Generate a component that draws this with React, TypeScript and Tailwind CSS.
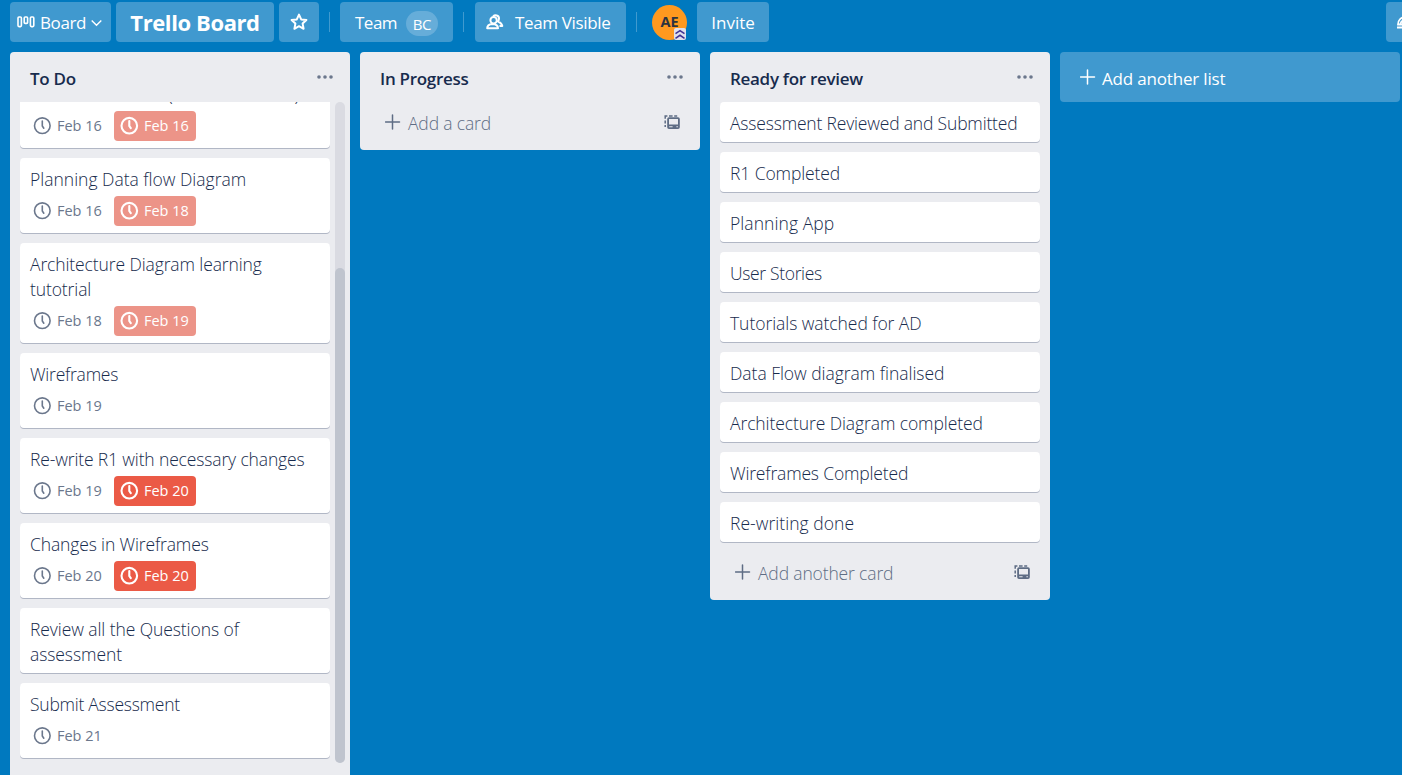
import type { ReactNode } from "react";

function Clock({ light }: { light?: boolean }) {
  return (
    <svg className="size-5 shrink-0" viewBox="0 0 20 20" fill="none" stroke="currentColor" strokeWidth={light ? 2.1 : 1.6} strokeLinecap="round">
      <circle cx="10.3" cy="9.7" r="7.8" />
      <path d="M10.3 5v5l1.5 2.2" />
    </svg>
  );
}

function Plus() {
  return (
    <svg className="size-4 shrink-0" viewBox="0 0 16 16" stroke="currentColor" strokeWidth="1.5" strokeLinecap="round">
      <path d="M7.5 1v14M.5 8h14" />
    </svg>
  );
}

function Dots() {
  return (
    <svg className="h-4 w-4 shrink-0" viewBox="0 0 16 16" fill="currentColor">
      <circle cx="2" cy="8" r="1.8" />
      <circle cx="8" cy="8" r="1.8" />
      <circle cx="14" cy="8" r="1.8" />
    </svg>
  );
}

function Template() {
  return (
    <svg className="h-[15px] w-4 shrink-0" viewBox="0 0 16 15" fill="none" stroke="currentColor">
      <path
        d="M5 2.2h9a1.8 1.8 0 0 1 1.8 1.8v8.2a1.8 1.8 0 0 1-1.8 1.8H5a1.8 1.8 0 0 1-1.8-1.8V4A1.8 1.8 0 0 1 5 2.2zM5 4v5.600h9V4zM5.2 11.2v1.100h3.400v-1.100zM12.400 11.2v1.100h1.500v-1.100z"
        fill="currentColor"
        fillRule="evenodd"
        stroke="none"
      />
      <path d="M1.2 12V10M1.2 8.4V5.4M1.2 3.8V.9H3.4M5 .9h3.6M10.2 .9h3" strokeWidth="1.5" />
    </svg>
  );
}

type CardData = { title: string; track: string; start?: string; due?: string; faded?: boolean };

const todo: CardData[] = [
  { title: "Create wireframes (first version draft)", track: "tracking-[-0.6px]", start: "Feb 16", due: "Feb 16", faded: true },
  { title: "Planning Data flow Diagram", track: "tracking-[0px]", start: "Feb 16", due: "Feb 18", faded: true },
  { title: "Architecture Diagram learning tutotrial", track: "tracking-[-0.11px]", start: "Feb 18", due: "Feb 19", faded: true },
  { title: "Wireframes", track: "tracking-[-0.24px]", start: "Feb 19" },
  { title: "Re-write R1 with necessary changes", track: "tracking-[-0.14px]", start: "Feb 19", due: "Feb 20" },
  { title: "Changes in Wireframes", track: "tracking-[-0.14px]", start: "Feb 20", due: "Feb 20" },
  { title: "Review all the Questions of assessment", track: "tracking-[-0.08px]" },
  { title: "Submit Assessment", track: "tracking-[-0.25px]", start: "Feb 21" },
];

const review: CardData[] = [
  { title: "Assessment Reviewed and Submitted", track: "tracking-[-0.18px]" },
  { title: "R1 Completed", track: "tracking-[-0.1px]" },
  { title: "Planning App", track: "tracking-[0.07px]" },
  { title: "User Stories", track: "tracking-[-0.34px]" },
  { title: "Tutorials watched for AD", track: "tracking-[-0.06px]" },
  { title: "Data Flow diagram finalised", track: "tracking-[-0.03px]" },
  { title: "Architecture Diagram completed", track: "tracking-[-0.09px]" },
  { title: "Wireframes Completed", track: "tracking-[-0.17px]" },
  { title: "Re-writing done", track: "tracking-[0.04px]" },
];

function Card({ title, track, start, due, faded }: CardData) {
  return (
    <div className="shrink-0 rounded-[4px] bg-white px-[10px] pt-[9px] pb-[6px] shadow-[0_1px_0_#b1b7c5]">
      <div className={`text-[17.5px] leading-[25px] font-[350] ${track}`}>{title}</div>
      {start && (
        <div className="mt-1 mb-px flex h-[30px] gap-[7px] text-[14.5px] tracking-[-0.03px]">
          <div className="flex w-[77px] items-center gap-[5px] pl-[2px] text-[#6b778c]">
            <Clock />
            <span className="-mt-px">{start}</span>
          </div>
          {due && (
            <div className={`flex w-[82px] items-center gap-[5px] rounded-[4px] pl-[5px] text-white ${faded ? "bg-[#ec9488]" : "bg-[#eb5a46]"}`}>
              <Clock light />
              <span className="-mt-px font-medium">{due}</span>
            </div>
          )}
        </div>
      )}
    </div>
  );
}

function ListHeader({ children }: { children: ReactNode }) {
  return (
    <div className="flex h-[50px] shrink-0 items-center justify-between pr-[17px] pl-5">
      <h2 className="pt-[3px] text-[17px] font-semibold tracking-[-0.3px]">{children}</h2>
      <span className="text-[#6b778c]">
        <Dots />
      </span>
    </div>
  );
}

function AddCard({ children }: { children: ReactNode }) {
  return (
    <div className="flex h-[40px] items-center pr-5 pl-[25px] text-[#5e6c84]">
      <Plus />
      <span className="mt-[3px] ml-[7px] flex-1 text-[17.5px] font-[350] tracking-[-0.15px]">{children}</span>
      <Template />
    </div>
  );
}

const Divider = () => <div className="h-5 w-px bg-white/25" />;

export default function App() {
  return (
    <div className="flex h-[775px] w-[1402px] flex-col overflow-hidden bg-[#0079bf] font-['Open_Sans','Noto_Sans',sans-serif] text-[#172b4d]">
      <header className="flex h-[52px] shrink-0 items-center pt-0.5 pb-[10px] pl-[10px] text-[17px] whitespace-nowrap text-white">
        <div className="flex h-10 w-[101px] items-center rounded-[4px] bg-[#4099cf] pl-[7px]">
          <svg className="h-3 w-[18px]" viewBox="0 0 18 12" fill="none" stroke="currentColor" strokeWidth="1.6">
            <rect x="1" y="1" width="3.4" height="9.6" rx="1" />
            <rect x="7.2" y="1" width="3.4" height="6.4" rx="1" />
            <rect x="13.4" y="1" width="3.4" height="9.6" rx="1" />
          </svg>
          <span className="mt-px ml-[5px] tracking-[-0.4px]">Board</span>
          <svg className="mt-[2px] ml-[5px] h-2 w-[11px]" viewBox="0 0 11 8" fill="none" stroke="currentColor" strokeWidth="1.4">
            <path d="M.7 1.5 5.5 6.3l4.8-4.8" />
          </svg>
        </div>
        <div className="ml-[5px] flex h-10 w-[158px] items-center justify-center rounded-[4px] bg-[#4099cf]">
          <h1 className="text-[22px] font-bold tracking-[-0.4px]">Trello Board</h1>
        </div>
        <div className="ml-[5px] flex h-10 w-10 items-center justify-center rounded-[4px] bg-[#4099cf]">
          <svg className="size-[18px]" viewBox="0 0 18 18" fill="none" stroke="currentColor" strokeWidth="2" strokeLinejoin="round">
            <path d="m9 1.600 2.200 4.800 5.200.6-3.800 3.600 1 5.200L9 13.200l-4.600 2.600 1-5.200L1.600 7l5.200-.6z" />
          </svg>
        </div>
        <div className="w-[10px]" />
        <Divider />
        <div className="ml-[10px] flex h-10 w-[113px] items-center rounded-[4px] bg-[#4099cf] pl-[15px]">
          <span className="mt-px w-[51px] tracking-[-0.5px]">Team</span>
          <span className="mt-[3px] flex h-[25px] w-8 items-center justify-center rounded-full bg-[#66add9] pt-px text-[15px] tracking-[-0.2px]">BC</span>
        </div>
        <div className="w-[10px]" />
        <Divider />
        <div className="ml-[11px] flex h-10 w-[151px] items-center rounded-[4px] bg-[#4099cf] pl-[11px]">
          <svg className="h-4 w-[18px]" viewBox="0 0 18 16" fill="none" stroke="currentColor" strokeWidth="2" strokeLinejoin="round">
            <path d="M1.200 14.300c0-2.600 1.800-4.200 5.300-4.400 3.500.1 5.500 1.800 5.500 4.400z" />
            <circle cx="7.600" cy="6.200" r="3.200" />
            <path d="M7.200 2.400c1.600-1.900 5.800-1.400 5.800 2 0 1.500-.4 2.200-1.100 3 2.600 1.200 4 2.600 4.400 4.600h-2.800" />
          </svg>
          <span className="mt-px ml-[11px] tracking-[-0.34px]">Team Visible</span>
        </div>
        <div className="w-[10px]" />
        <Divider />
        <div className="relative ml-[15px] flex size-[35px] items-center justify-center rounded-full bg-[#ff991f] text-[14.5px] font-bold text-[#2c3340]">
          AE
          <svg className="absolute right-px bottom-0 size-3" viewBox="0 0 12 12" fill="none">
            <rect width="12" height="12" rx="2" fill="#dfe1ec" />
            <path d="m1.500 5.700 4.500-3 4.500 3M1.500 10.300l4.500-3 4.500 3" stroke="#403294" strokeWidth="1.600" />
          </svg>
        </div>
        <div className="ml-[10px] flex h-10 w-[72px] items-center justify-center rounded-[4px] bg-[#4099cf]">
          <span className="mt-px">Invite</span>
        </div>
        <div className="ml-auto flex h-10 w-4 items-center overflow-hidden rounded-l-[4px] bg-[#4099cf] pl-[11px]">
          <svg className="h-[15px] w-[18px] shrink-0" viewBox="0 0 18 15" fill="none" stroke="currentColor" strokeWidth="1.800">
            <path d="M1 9.500C1 5 4 2 9 2s8 3 8 7.500z M3.500 9C4 6.500 5 5.500 7 5M0 12.500h18" />
          </svg>
        </div>
      </header>

      <main className="flex min-h-0 flex-1 items-start gap-[10px] pl-[10px]">
        <section className="flex h-[723px] w-[340px] shrink-0 flex-col rounded-t-[4px] bg-[#ebecf0]">
          <ListHeader>To Do</ListHeader>
          <div className="flex h-[661px] justify-between pr-[5px] pl-[10px]">
            <div className="flex w-[310px] flex-col justify-end gap-[10px] overflow-hidden pb-[5px]">
              {todo.map((c) => (
                <Card key={c.title} {...c} />
              ))}
            </div>
            <div className="flex w-[10px] flex-col justify-end rounded-full bg-[#dadbe2]">
              <div className="h-[495px] rounded-full bg-[#bfc4ce]" />
            </div>
          </div>
        </section>

        <section className="flex h-[98px] w-[340px] shrink-0 flex-col rounded-[4px] bg-[#ebecf0]">
          <ListHeader>In Progress</ListHeader>
          <AddCard>Add a card</AddCard>
        </section>

        <section className="flex h-[548px] w-[340px] shrink-0 flex-col rounded-[4px] bg-[#ebecf0]">
          <ListHeader>Ready for review</ListHeader>
          <div className="mb-[10px] flex flex-col gap-[10px] px-[10px]">
            {review.map((c) => (
              <Card key={c.title} {...c} />
            ))}
          </div>
          <AddCard>Add another card</AddCard>
        </section>

        <section className="flex h-[50px] w-[340px] shrink-0 items-center rounded-[4px] bg-[#4099cf] pl-5 text-white">
          <Plus />
          <span className="mt-[3px] ml-[6px] text-[17px] tracking-[-0.18px]">Add another list</span>
        </section>
      </main>
    </div>
  );
}
